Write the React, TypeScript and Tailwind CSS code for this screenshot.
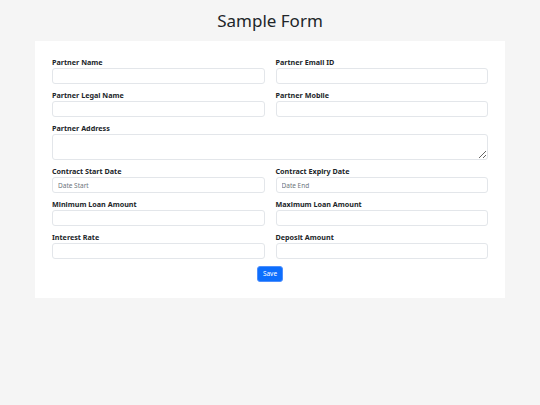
import React from 'react'

const font = { fontFamily: '"Noto Sans", "Open Sans", sans-serif' }

function Field({ label, placeholder }: { label: string; placeholder?: string }) {
  return (
    <div className="flex flex-col">
      <label className="pt-[1px] text-[7.2px] leading-[11px] font-bold text-[#212529]">{label}</label>
      <input
        className="h-[16px] w-full rounded-[3px] border border-[#e3e6ea] bg-white px-[5px] text-[6.5px] text-[#212529] outline-none placeholder:text-[#6c757d]"
        placeholder={placeholder}
      />
    </div>
  )
}

export default function App() {
  const rows: [string, string?][][] = [
    [['Partner Name'], ['Partner Email ID']],
    [['Partner Legal Name'], ['Partner Mobile']],
  ]
  const rows2: [string, string?][][] = [
    [['Contract Start Date', 'Date Start'], ['Contract Expiry Date', 'Date End']],
    [['Minimum Loan Amount'], ['Maximum Loan Amount']],
    [['Interest Rate'], ['Deposit Amount']],
  ]

  return (
    <div className="min-h-[405px] bg-[#f5f5f5]" style={font}>
      <h1 className="h-[41px] pt-[7px] text-center text-[17px] leading-[28px] text-[#212529]">Sample Form</h1>

      <div className="mx-[35px] bg-white px-[17px] pt-[15px] pb-[16px]">
        <div className="flex flex-col gap-[5px]">
          {rows.map((row, i) => (
            <div key={i} className="grid grid-cols-2 gap-x-[11px]">
              {row.map(([label, ph]) => (
                <Field key={label} label={label} placeholder={ph} />
              ))}
            </div>
          ))}

          {/* Address */}
          <div className="flex flex-col">
            <label className="pt-[1px] text-[7.2px] leading-[11px] font-bold text-[#212529]">Partner Address</label>
            <textarea className="block h-[26px] w-full rounded-[3px] border border-[#e3e6ea] bg-white px-[5px] text-[6.5px] outline-none" />
          </div>

          {rows2.map((row, i) => (
            <div key={i} className="grid grid-cols-2 gap-x-[11px]">
              {row.map(([label, ph]) => (
                <Field key={label} label={label} placeholder={ph} />
              ))}
            </div>
          ))}
        </div>

        <div className="mt-[7px] flex justify-center">
          <button className="h-[16px] w-[26px] rounded-[3px] border border-[#4d8ffd] bg-[#0d6efd] text-[6.5px] leading-none text-white">
            Save
          </button>
        </div>
      </div>
    </div>
  )
}
